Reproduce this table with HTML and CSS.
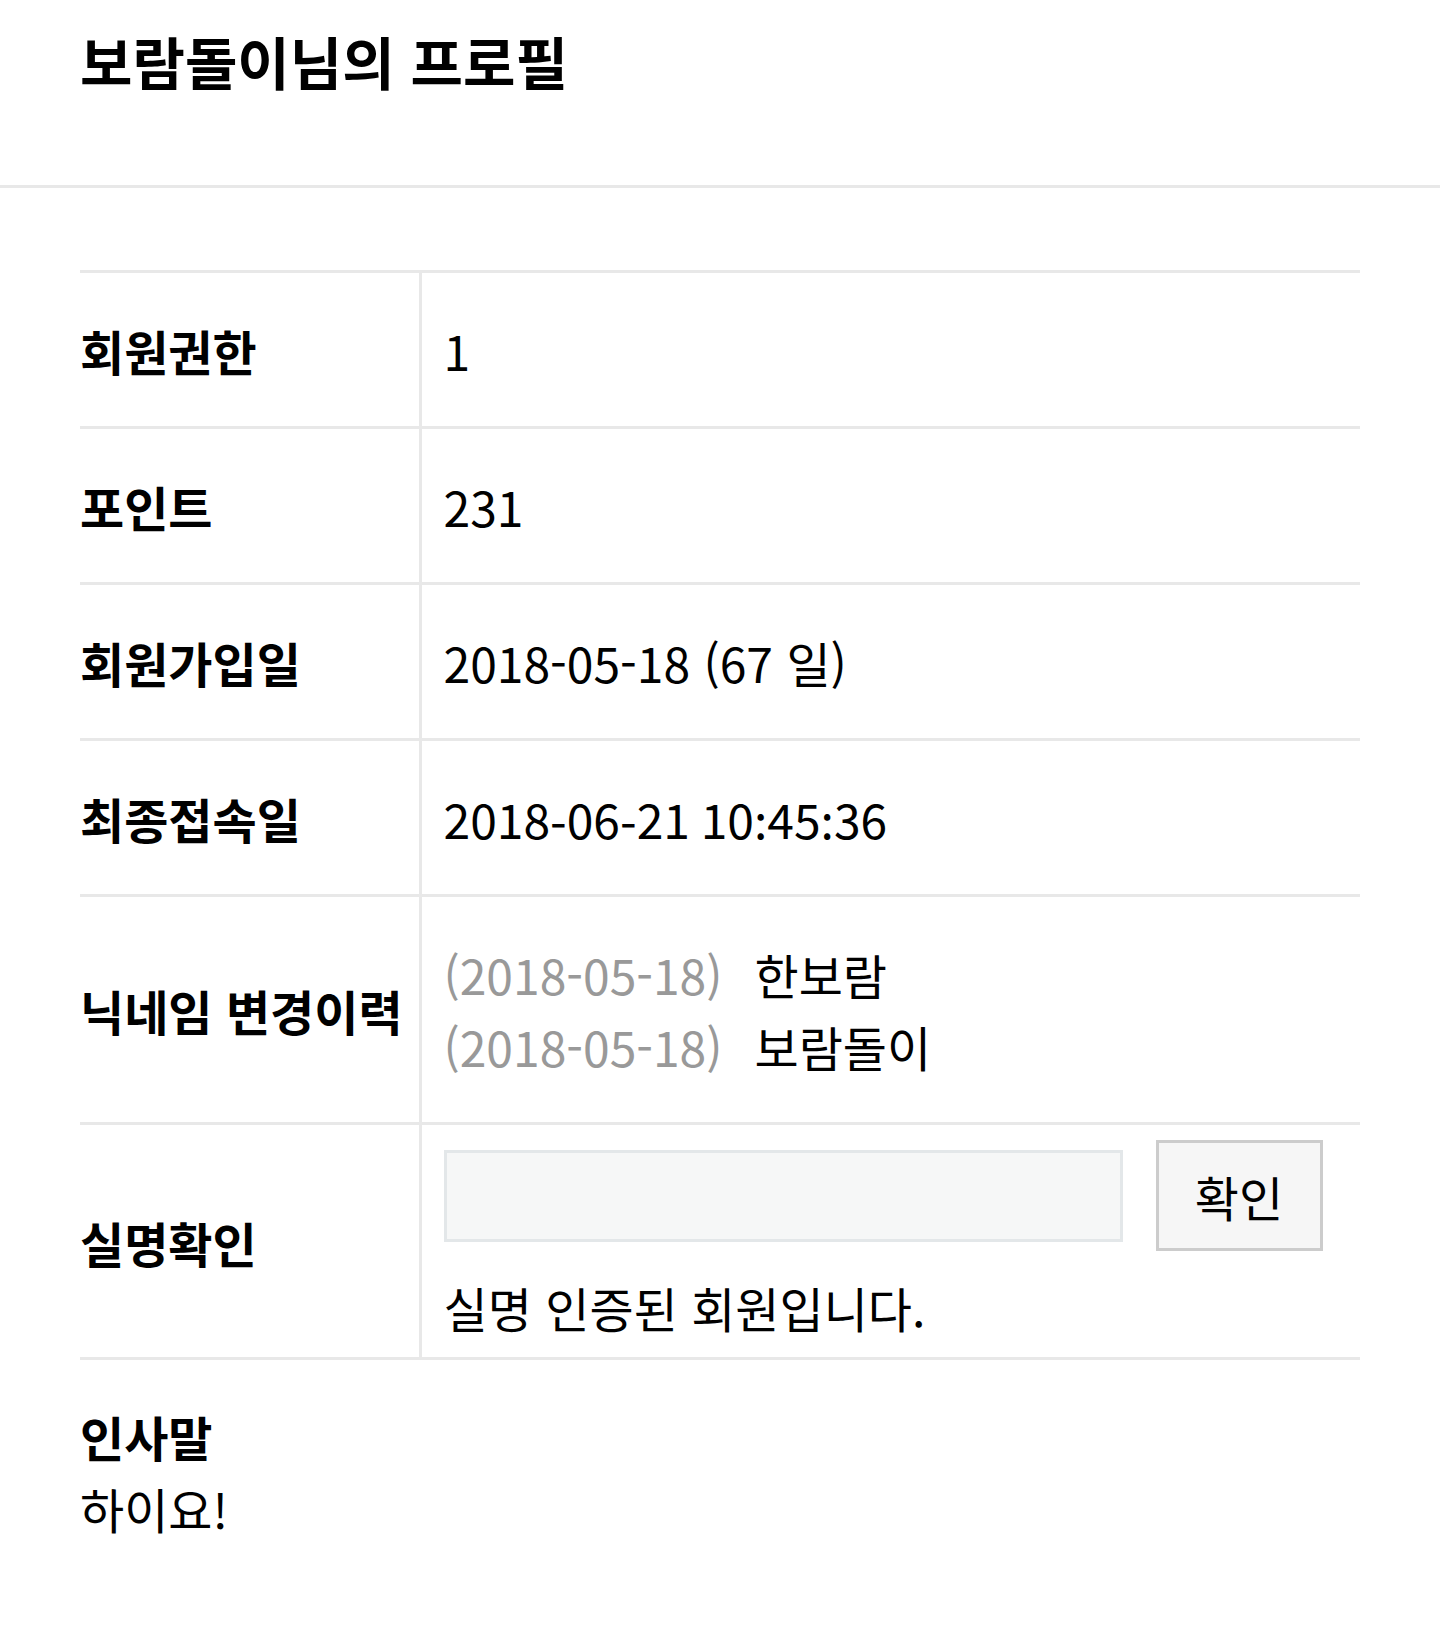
FILE: index.html
```html
<!DOCTYPE html>
<html lang="ko">
<head>
<meta charset="utf-8">
<title>보람돌이님의 프로필</title>
<link rel="stylesheet" href="styles.css">
</head>
<body>
<header class="page-head">
  <h1 class="page-title">보람돌이님의 프로필</h1>
</header>
<main class="profile">
  <table class="info">
    <tbody>
      <tr>
        <th>회원권한</th>
        <td>1</td>
      </tr>
      <tr>
        <th>포인트</th>
        <td>231</td>
      </tr>
      <tr>
        <th>회원가입일</th>
        <td>2018-05-18 (67 일)</td>
      </tr>
      <tr>
        <th>최종접속일</th>
        <td lang="en">2018-06-21 10:45:36</td>
      </tr>
      <tr>
        <th>닉네임 변경이력</th>
        <td>
          <div class="nick"><span class="nick-date">(2018-05-18)</span><span>한보람</span></div>
          <div class="nick"><span class="nick-date">(2018-05-18)</span><span>보람돌이</span></div>
        </td>
      </tr>
      <tr class="auth-row">
        <th>실명확인</th>
        <td>
          <div class="auth-form">
            <input class="auth-input" type="text" aria-label="실명확인">
            <button class="auth-btn" type="button">확인</button>
          </div>
          <p class="auth-msg">실명 인증된 회원입니다.</p>
        </td>
      </tr>
    </tbody>
  </table>
  <section class="greeting">
    <h2 class="greeting-title">인사말</h2>
    <p class="greeting-text">하이요!</p>
  </section>
</main>
</body>
</html>
```

FILE: styles.css
```css
html, body {
  margin: 0;
  padding: 0;
  background: #fff;
}
body {
  font-family: "Noto Sans CJK KR", "Noto Sans", sans-serif;
  color: #000;
}
.page-head {
  box-sizing: border-box;
  height: 188px;
  padding: 18px 80px 0;
  border-bottom: 3px solid #e8e8e8;
}
.page-title {
  margin: 0;
  font-size: 57px;
  line-height: 84px;
  font-weight: 700;
}
.profile {
  padding: 82px 80px 100px;
}
.info {
  width: 100%;
  border-collapse: collapse;
  border-top: 3px solid #e8e8e8;
  font-size: 48px;
  line-height: 72px;
}
.info tr {
  border-bottom: 3px solid #e8e8e8;
}
.info th {
  width: 340px;
  box-sizing: border-box;
  padding: 41px 0 40px 0;
  text-align: left;
  font-weight: 700;
  vertical-align: middle;
  border-right: 3px solid #e8e8e8;
  white-space: nowrap;
}
.info td {
  padding: 41px 22px 40px;
  vertical-align: middle;
  font-weight: 400;
}
.nick-date {
  color: #999;
  margin-right: 32px;
}
.auth-row th {
  padding: 15px 0 14px;
}
.auth-row td {
  padding: 15px 22px 14px;
}
.auth-form {
  display: flex;
  align-items: center;
  gap: 33px;
}
.auth-input {
  box-sizing: border-box;
  width: 679px;
  height: 92px;
  margin: 0;
  border: 3px solid #e3e7e9;
  background: #f6f7f7;
  font: inherit;
}
.auth-btn {
  box-sizing: border-box;
  width: 167px;
  height: 111px;
  margin: 0;
  padding: 0;
  border: 3px solid #cccccc;
  background: #f6f6f6;
  font-family: inherit;
  font-size: 48px;
  color: #000;
}
.auth-msg {
  margin: 20px 0 0;
}
.greeting {
  margin-top: 40px;
  font-size: 48px;
  line-height: 72px;
}
.greeting-title {
  margin: 0;
  font-size: 48px;
  font-weight: 700;
}
.greeting-text {
  margin: 0;
}
```
